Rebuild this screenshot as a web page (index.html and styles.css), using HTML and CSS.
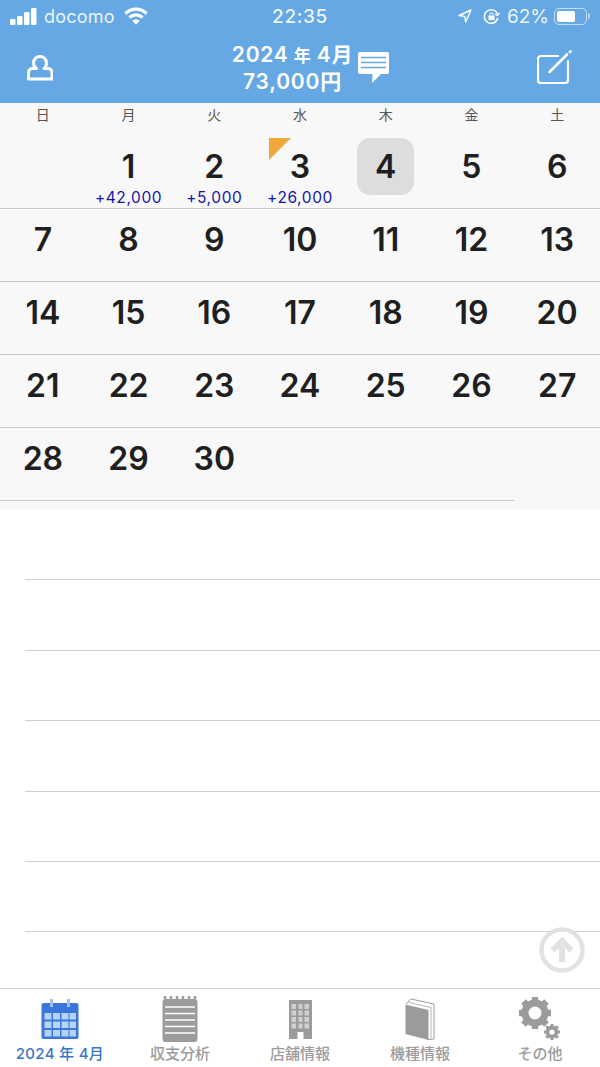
FILE: index.html
```html
<!DOCTYPE html>
<html lang="ja">
<head>
    <meta charset="UTF-8">
    <meta name="viewport" content="width=device-width, initial-scale=1.0">
    <title>2024年4月</title>
    <link rel="stylesheet" href="styles.css">
</head>
<body>
<div class="page">
    <!-- ステータスバー -->
    <div class="status-bar">
        <div class="status-left">
            <svg class="signal" width="27" height="17" viewBox="0 0 27 17" fill="#fff">
                <rect x="0" y="11" width="5.500" height="6" rx="1.200"/>
                <rect x="7" y="8" width="5.500" height="9" rx="1.200"/>
                <rect x="14" y="4" width="5.500" height="13" rx="1.200"/>
                <rect x="21" y="0" width="5.500" height="17" rx="1.200"/>
            </svg>
            <span class="carrier">docomo</span>
            <svg class="wifi" width="24" height="18" viewBox="0 0 24 18" fill="none" stroke="#fff" stroke-width="3.200">
                <path d="M1.500 6.500a15 15 0 0 1 21 0"/>
                <path d="M5.500 10.500a9.500 9.500 0 0 1 13 0"/>
                <path d="M12 17.800l-3.800-4a5.200 5.200 0 0 1 7.600 0z" fill="#fff" stroke="none"/>
            </svg>
        </div>
        <div class="status-time">22:35</div>
        <div class="status-right">
            <svg width="14" height="14" viewBox="0 0 14 14" fill="none" stroke="#fff" stroke-width="1.400" stroke-linejoin="round">
                <path d="M13 1L1 6.500l5.800.9.900 5.600z"/>
            </svg>
            <svg class="lock" width="17" height="17" viewBox="0 0 17 17" fill="none" stroke="#fff" stroke-width="1.500">
                <path d="M14.500 6a6.800 6.800 0 1 0 .3 4"/>
                <path d="M16.500 5l-2 2.500L12 6" stroke-width="1.300"/>
                <rect x="5.500" y="7.500" width="6" height="4.500" fill="#fff" stroke="none"/>
                <path d="M6.800 7.500V6.600a1.700 1.700 0 0 1 3.400 0v.9" stroke-width="1"/>
            </svg>
            <span class="battery-pct">62%</span>
            <div class="battery"><div class="battery-level"></div></div>
            <div class="battery-nub"></div>
        </div>
    </div>

    <!-- ヘッダー -->
    <header class="nav">
        <svg class="nav-user" width="26" height="26" viewBox="0 0 26 26" fill="none" stroke="#fff" stroke-width="3" stroke-linejoin="round">
            <path d="M13 1.500a6.500 6.500 0 0 1 6.500 6.500c0 2.500-1 4.500-2.500 5.500h3.500a4 4 0 0 1 4.500 4v6.500H1.500V17.500a4 4 0 0 1 4.500-4h3.500C8 12.500 6.500 10.500 6.500 8A6.500 6.500 0 0 1 13 1.500z"/>
        </svg>
        <div class="nav-center">
            <div class="nav-title">
                <div>2024<span class="nav-kanji"> 年 </span>4月</div>
                <div>73,000円</div>
            </div>
            <svg class="nav-memo" width="31" height="32" viewBox="0 0 31 32">
                <path d="M2 0h27a2 2 0 0 1 2 2v18a2 2 0 0 1-2 2H23l-9 9 .5-9H2a2 2 0 0 1-2-2V2a2 2 0 0 1 2-2z" fill="#fff"/>
                <path d="M3 5.500h25M3 10.500h25M3 15.500h25" stroke="#65a8e4" stroke-width="1.300"/>
            </svg>
        </div>
        <svg class="nav-edit" width="36" height="36" viewBox="0 0 36 36" fill="none" stroke="#fff" stroke-linecap="round">
            <path d="M21 6H4a3 3 0 0 0-3 3v21a3 3 0 0 0 3 3h24a3 3 0 0 0 3-3V11" stroke-width="2.200"/>
            <path d="M12.500 22L30 4.500" stroke-width="2.600"/>
            <path d="M33 2l.5-.5" stroke-width="2.800"/>
        </svg>
    </header>

    <!-- カレンダー -->
    <section class="calendar">
        <div class="weekdays">
            <div>日</div><div>月</div><div>火</div><div>水</div><div>木</div><div>金</div><div>土</div>
        </div>
        <div class="week week-first">
            <div class="day"></div>
            <div class="day"><span class="num">1</span><span class="amount">+42,000</span></div>
            <div class="day"><span class="num">2</span><span class="amount">+5,000</span></div>
            <div class="day"><span class="memo-mark"></span><span class="num">3</span><span class="amount">+26,000</span></div>
            <div class="day"><span class="num today">4</span></div>
            <div class="day"><span class="num">5</span></div>
            <div class="day"><span class="num">6</span></div>
        </div>
        <div class="week">
            <div class="day"><span class="num">7</span></div>
            <div class="day"><span class="num">8</span></div>
            <div class="day"><span class="num">9</span></div>
            <div class="day"><span class="num">10</span></div>
            <div class="day"><span class="num">11</span></div>
            <div class="day"><span class="num">12</span></div>
            <div class="day"><span class="num">13</span></div>
        </div>
        <div class="week">
            <div class="day"><span class="num">14</span></div>
            <div class="day"><span class="num">15</span></div>
            <div class="day"><span class="num">16</span></div>
            <div class="day"><span class="num">17</span></div>
            <div class="day"><span class="num">18</span></div>
            <div class="day"><span class="num">19</span></div>
            <div class="day"><span class="num">20</span></div>
        </div>
        <div class="week">
            <div class="day"><span class="num">21</span></div>
            <div class="day"><span class="num">22</span></div>
            <div class="day"><span class="num">23</span></div>
            <div class="day"><span class="num">24</span></div>
            <div class="day"><span class="num">25</span></div>
            <div class="day"><span class="num">26</span></div>
            <div class="day"><span class="num">27</span></div>
        </div>
        <div class="week">
            <div class="day"><span class="num">28</span></div>
            <div class="day"><span class="num">29</span></div>
            <div class="day"><span class="num">30</span></div>
            <div class="day"></div>
            <div class="day"></div>
            <div class="day"></div>
            <div class="day day-blank"></div>
        </div>
    </section>

    <!-- 一覧 -->
    <section class="list">
        <div class="list-row"></div>
        <div class="list-row"></div>
        <div class="list-row"></div>
        <div class="list-row"></div>
        <div class="list-row"></div>
        <div class="list-row"></div>
        <svg class="to-top" width="46" height="46" viewBox="0 0 46 46" fill="none">
            <circle cx="23" cy="23" r="20.500" stroke="#e2e2e2" stroke-width="4.500"/>
            <path d="M23 35V15M13.500 23.500L23 14l9.500 9.500" stroke="#e2e2e2" stroke-width="6"/>
        </svg>
    </section>

    <!-- タブバー -->
    <nav class="tabs">
        <div class="tab tab-active">
            <div class="tab-icon">
                <svg width="38" height="40" viewBox="0 0 38 40">
                    <rect x="0.500" y="4" width="37" height="36" rx="2" fill="#3a76dc"/>
                    <rect x="9" y="0" width="3" height="8" fill="#9dc0f0"/>
                    <rect x="26" y="0" width="3" height="8" fill="#9dc0f0"/>
                    <g fill="#b5d4f5">
                        <rect x="3.500" y="14" width="7" height="6.500"/><rect x="12" y="14" width="7" height="6.500"/><rect x="20.500" y="14" width="7" height="6.500"/><rect x="28.500" y="14" width="6.500" height="6.500"/>
                        <rect x="3.500" y="22.500" width="7" height="6.500"/><rect x="12" y="22.500" width="7" height="6.500"/><rect x="20.500" y="22.500" width="7" height="6.500"/><rect x="28.500" y="22.500" width="6.500" height="6.500"/>
                        <rect x="3.500" y="31" width="7" height="6.500"/><rect x="12" y="31" width="7" height="6.500"/><rect x="20.500" y="31" width="7" height="6.500"/><rect x="28.500" y="31" width="6.500" height="6.500"/>
                    </g>
                </svg>
            </div>
            <span class="tab-label">2024 年 4月</span>
        </div>
        <div class="tab">
            <div class="tab-icon">
                <svg width="36" height="46" viewBox="0 0 36 46">
                    <rect x="0.500" y="3" width="35" height="43" rx="3" fill="#9b9b9b"/>
                    <path d="M3 3V0M9 3V0M15 3V0M21 3V0M27 3V0M33 3V0" stroke="#9b9b9b" stroke-width="2.500"/>
                    <path d="M3 11h30M3 17.500h30M3 24h30M3 30.500h30M3 37h30" stroke="#fff" stroke-width="1.500"/>
                </svg>
            </div>
            <span class="tab-label">収支分析</span>
        </div>
        <div class="tab">
            <div class="tab-icon">
                <svg width="23" height="39" viewBox="0 0 23 39">
                    <path d="M0 0h23v39h-8.500v-7h-6v7H0z" fill="#9b9b9b"/>
                    <g fill="#cfcfcf">
                        <rect x="2.500" y="4" width="4.500" height="5"/><rect x="9.500" y="4" width="4" height="5"/><rect x="15.500" y="4" width="4.500" height="5"/>
                        <rect x="2.500" y="10.500" width="4.500" height="5"/><rect x="9.500" y="10.500" width="4" height="5"/><rect x="15.500" y="10.500" width="4.500" height="5"/>
                        <rect x="2.500" y="17" width="4.500" height="5"/><rect x="9.500" y="17" width="4" height="5"/><rect x="15.500" y="17" width="4.500" height="5"/>
                        <rect x="2.500" y="23.500" width="4.500" height="5"/><rect x="9.500" y="23.500" width="4" height="5"/><rect x="15.500" y="23.500" width="4.500" height="5"/>
                    </g>
                </svg>
            </div>
            <span class="tab-label">店舗情報</span>
        </div>
        <div class="tab">
            <div class="tab-icon">
                <svg width="30" height="42" viewBox="0 0 30 42">
                    <path d="M1 6l5-5 23 5v35l-6 .5" fill="#fff" stroke="#9b9b9b" stroke-width="1"/>
                    <path d="M0.500 6.500L23.500 12v30L0.500 36z" fill="#9b9b9b"/>
                    <path d="M3.500 4.500L26 9.500v31" fill="none" stroke="#b5b5b5" stroke-width="1"/>
                </svg>
            </div>
            <span class="tab-label">機種情報</span>
        </div>
        <div class="tab">
            <div class="tab-icon">
                <svg width="44" height="44" viewBox="0 0 44 44">
                    <g fill="none" stroke="#9b9b9b">
                        <circle cx="17" cy="16" r="10" stroke-width="7"/>
                        <path d="M17 0v5M17 27v5M1 16h5M28 16h5M5.500 4.500l4 4M24.500 23.500l4 4M5.500 27.500l4-4M24.500 8.500l4-4" stroke-width="6.500"/>
                        <circle cx="34" cy="35" r="4.500" stroke-width="3.800"/>
                        <path d="M34 27v2.500M34 40.500V43M26 35h2.500M39.500 35H42M28.300 29.300l1.800 1.800M38 39l1.800 1.800M28.300 40.700l1.800-1.800M38 31l1.800-1.800" stroke-width="3"/>
                    </g>
                </svg>
            </div>
            <span class="tab-label">その他</span>
        </div>
    </nav>
</div>
</body>
</html>
```

FILE: styles.css
```css
* {
    box-sizing: border-box;
}

body {
    margin: 0;
    font-family: Inter, "Noto Sans CJK JP", sans-serif;
    background: #fff;
}

.page {
    width: 600px;
    height: 1067px;
    display: flex;
    flex-direction: column;
    overflow: hidden;
}

/* ステータスバー */
.status-bar {
    height: 32px;
    background: #65a8e4;
    color: rgba(255, 255, 255, 0.9);
    display: grid;
    grid-template-columns: 1fr auto 1fr;
    align-items: center;
    font-size: 18px;
}

.status-left {
    display: flex;
    align-items: center;
    padding-left: 10px;
}

.carrier {
    margin-left: 7px;
    letter-spacing: 0.2px;
}

.wifi {
    margin-left: 9px;
}

.status-time {
    font-size: 19px;
    letter-spacing: 0.6px;
    font-weight: 500;
}

.status-right {
    display: flex;
    align-items: center;
    justify-content: flex-end;
    padding-right: 10px;
}

.lock {
    margin-left: 11px;
}

.battery-pct {
    margin-left: 7px;
    font-size: 19px;
}

.battery {
    width: 33px;
    height: 17px;
    margin-left: 5px;
    padding: 2px;
    border: 1px solid rgba(255, 255, 255, 0.6);
    border-radius: 5px;
}

.battery-level {
    width: 18px;
    height: 100%;
    background: #fff;
    border-radius: 2px;
}

.battery-nub {
    width: 2px;
    height: 6px;
    margin-left: 1px;
    background: rgba(255, 255, 255, 0.5);
    border-radius: 0 2px 2px 0;
}

/* ヘッダー */
.nav {
    height: 71px;
    background: #65a8e4;
    display: flex;
    align-items: center;
    padding: 0 27px;
}

.nav-center {
    display: flex;
    align-items: center;
    margin-left: 178px;
}

.nav-title {
    width: 123px;
    margin-top: 1px;
    color: #fff;
    font-size: 21px;
    line-height: 26px;
    font-weight: 600;
    letter-spacing: 0.8px;
    text-align: center;
    white-space: nowrap;
}

.nav-kanji {
    font-size: 17px;
}

.nav-memo {
    margin-left: 4px;
}

.nav-edit {
    margin-left: auto;
}

/* カレンダー */
.calendar {
    background: #f8f8f8;
    height: 407px;
}

.weekdays {
    display: grid;
    grid-template-columns: repeat(7, 1fr);
    height: 25px;
    font-size: 14px;
    line-height: 24px;
    color: #555;
    text-align: center;
}

.week {
    display: grid;
    grid-template-columns: repeat(7, 1fr);
    height: 73px;
}

.week-first {
    height: 81px;
}

.day {
    position: relative;
    display: flex;
    flex-direction: column;
    align-items: center;
    justify-content: flex-start;
    padding-top: 2px;
    border-bottom: 1px solid #c9c9c9;
}

.day-blank {
    border-bottom: 0;
}

.week-first .day {
    padding-top: 10px;
}

.num {
    width: 57px;
    height: 57px;
    display: flex;
    align-items: center;
    justify-content: center;
    font-size: 32px;
    font-weight: 600;
    color: #1f1f1f;
}

.today {
    background: #dddddd;
    border-radius: 13px;
}

.amount {
    margin-top: -6px;
    font-size: 15.500px;
    line-height: 18px;
    color: #1414a8;
    letter-spacing: 0.6px;
    white-space: nowrap;
}

.memo-mark {
    position: absolute;
    left: 12px;
    top: 10px;
    width: 0;
    height: 0;
    border-top: 22px solid #f0a73c;
    border-right: 22px solid transparent;
}

/* 一覧 */
.list {
    position: relative;
    flex: 1;
    padding-left: 25px;
}

.list-row {
    height: 70.400px;
    border-bottom: 1px solid #cfcfcf;
}

.to-top {
    position: absolute;
    right: 15px;
    bottom: 15px;
}

/* タブバー */
.tabs {
    height: 79px;
    border-top: 1px solid #cfcfcf;
    display: grid;
    grid-template-columns: repeat(5, 1fr);
    background: #fff;
}

.tab {
    display: flex;
    flex-direction: column;
    align-items: center;
    padding-top: 7px;
    color: #9b9b9b;
}

.tab-icon {
    height: 46px;
    display: flex;
    align-items: center;
}

.tab-label {
    margin-top: 2px;
    font-size: 15px;
    line-height: 20px;
    font-weight: 500;
}

.tab-active {
    color: #3a76c8;
}

.tab-active .tab-label {
    letter-spacing: 0.3px;
}
```
